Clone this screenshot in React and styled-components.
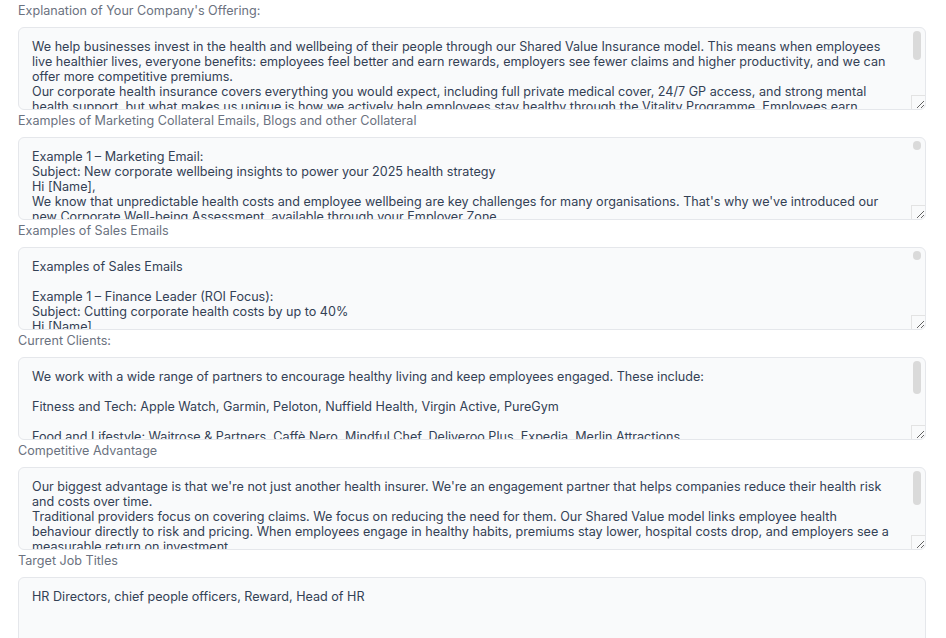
import React from "react";
import styled, { createGlobalStyle } from "styled-components";

const Global = createGlobalStyle`
  html, body { margin: 0; padding: 0; background: #ffffff; }
  body { font-family: Inter, "Noto Sans", sans-serif; }
`;

const Page = styled.div`
  padding: 0 20px 0 18px;
  display: flex;
  flex-direction: column;
`;

const Field = styled.div`
  display: flex;
  flex-direction: column;
`;

const Label = styled.label`
  display: block;
  padding-top: 2px;
  margin-bottom: 7px;
  font-size: 12.6px;
  line-height: 18px;
  color: #6b7280;
`;

const Box = styled.div`
  position: relative;
`;

const Area = styled.textarea`
  box-sizing: border-box;
  width: 100%;
  height: 83px;
  margin: 0;
  padding: 11px ${(p) => (p.$scroll ? 33 : 13)}px 11px 13px;
  border: 1px solid #e5e7eb;
  border-radius: 6px;
  background: #f9fafb;
  color: #334155;
  font-family: Inter, "Noto Sans", sans-serif;
  font-size: 12.6px;
  line-height: 15px;
  resize: vertical;
  outline: none;
  display: block;
  overflow: hidden;
`;

const Thumb = styled.div`
  position: absolute;
  top: 4px;
  right: 5px;
  width: 8px;
  border-radius: 4px;
  background: #dadada;
  pointer-events: none;
`;

const Corner = styled.div`
  position: absolute;
  right: 1px;
  bottom: 1px;
  width: 13px;
  height: 13px;
  border-left: 1px solid #e3e3e3;
  border-top: 1px solid #e3e3e3;
  pointer-events: none;
`;

const offering = `We help businesses invest in the health and wellbeing of their people through our Shared Value Insurance model. This means when employees live healthier lives, everyone benefits: employees feel better and earn rewards, employers see fewer claims and higher productivity, and we can offer more competitive premiums.
Our corporate health insurance covers everything you would expect, including full private medical cover, 24/7 GP access, and strong mental health support, but what makes us unique is how we actively help employees stay healthy through the Vitality Programme. Employees earn points for everyday healthy activities and unlock rewards from leading brands, which keeps engagement high all year round.
We also give employers clear insight into the health of their workforce through our Employer Zone, so they can make better decisions about their wellbeing strategy.`;

const marketing = `Example 1 – Marketing Email:
Subject: New corporate wellbeing insights to power your 2025 health strategy
Hi [Name],
We know that unpredictable health costs and employee wellbeing are key challenges for many organisations. That's why we've introduced our new Corporate Well-being Assessment, available through your Employer Zone.
The assessment gives you a clear view of the health of your workforce, highlights key risk areas, and shows where targeted support can make the biggest difference.
With these insights you can build a wellbeing strategy that is grounded in data, reduce absence, and improve engagement across your business.
Log in to your Employer Zone today to get started, or speak to your account manager to find out more.
Kind regards,
The Corporate Team`;

const sales = `Examples of Sales Emails

Example 1 – Finance Leader (ROI Focus):
Subject: Cutting corporate health costs by up to 40%
Hi [Name]
Rising healthcare costs are a growing concern for finance leaders. Our Shared Value Insurance model has helped organisations reduce claims costs by up to 40% by rewarding employees for staying healthy.
Would you be open to a 20-minute conversation to explore what this could look like for your business?
Best regards,
[Your Name]`;

const clients = `We work with a wide range of partners to encourage healthy living and keep employees engaged. These include:

Fitness and Tech: Apple Watch, Garmin, Peloton, Nuffield Health, Virgin Active, PureGym

Food and Lifestyle: Waitrose & Partners, Caffè Nero, Mindful Chef, Deliveroo Plus, Expedia, Merlin Attractions

Entertainment: Vue Cinemas, Amazon Prime, Cineworld`;

const advantage = `Our biggest advantage is that we're not just another health insurer. We're an engagement partner that helps companies reduce their health risk and costs over time.
Traditional providers focus on covering claims. We focus on reducing the need for them. Our Shared Value model links employee health behaviour directly to risk and pricing. When employees engage in healthy habits, premiums stay lower, hospital costs drop, and employers see a measurable return on investment.
We also provide detailed reporting through the Employer Zone, so HR and finance teams can track engagement and outcomes.`;

const titles = `HR Directors, chief people officers, Reward, Head of HR`;

const fields = [
  { label: "Explanation of Your Company's Offering:", value: offering, thumb: 29 },
  { label: "Examples of Marketing Collateral Emails, Blogs and other Collateral", value: marketing, thumb: 9 },
  { label: "Examples of Sales Emails", value: sales, thumb: 9 },
  { label: "Current Clients:", value: clients, thumb: 33 },
  { label: "Competitive Advantage", value: advantage, thumb: 34 },
  { label: "Target Job Titles", value: titles, thumb: 0 },
];

export default function App() {
  return (
    <>
      <Global />
      <Page>
        {fields.map((f, i) => (
          <Field key={i}>
            <Label htmlFor={`f${i}`}>{f.label}</Label>
            <Box>
              <Area
                id={`f${i}`}
                defaultValue={f.value}
                spellCheck={false}
                $scroll={f.thumb > 0}
              />
              {f.thumb > 0 && (
                <>
                  <Thumb style={{ height: f.thumb }} />
                  <Corner />
                </>
              )}
            </Box>
          </Field>
        ))}
      </Page>
    </>
  );
}
